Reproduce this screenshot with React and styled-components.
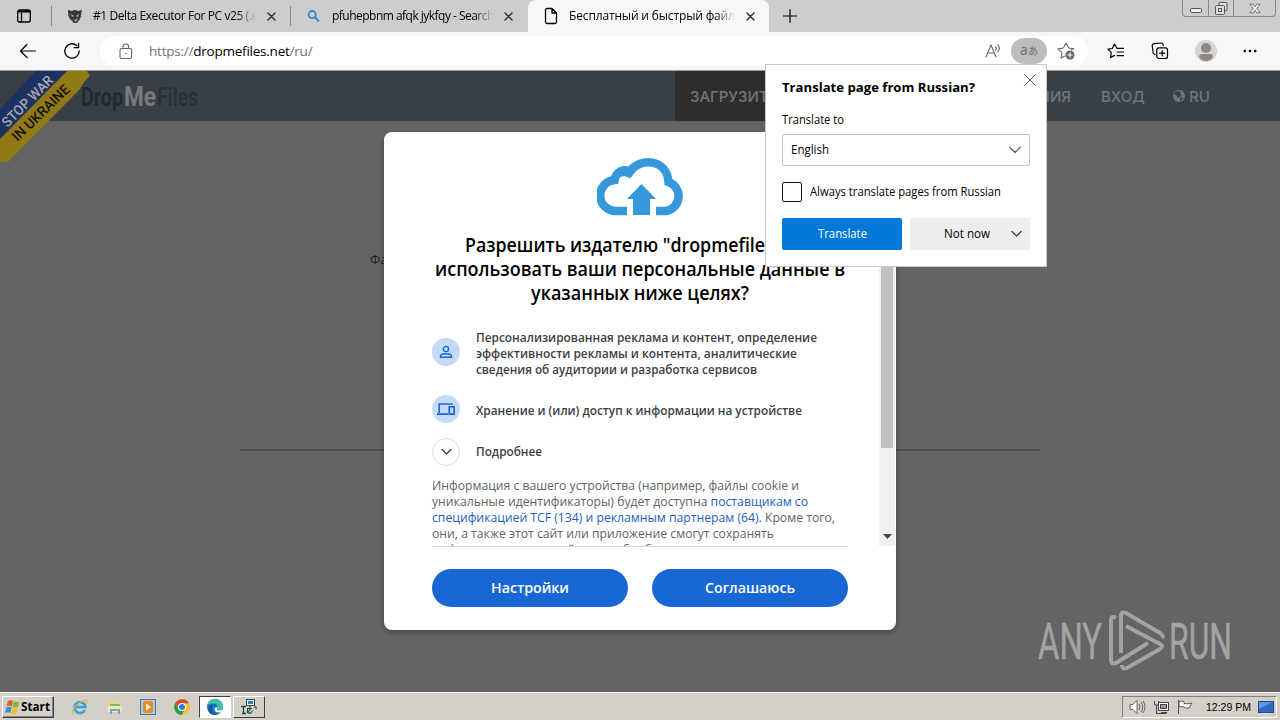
import React from 'react'
import styled, { createGlobalStyle } from 'styled-components'

const uiFont = `'Open Sans', 'Noto Sans', sans-serif`

const tabs = [
  { title: '#1 Delta Executor For PC v25 (.e', icon: 'delta', width: 239, spacing: -0.42 },
  { title: 'pfuhepbnm afqk jykfqy - Search', icon: 'search', width: 237, spacing: -0.52 },
  { title: 'Бесплатный и быстрый файло', icon: 'page', width: 241, spacing: -0.15, active: true },
]

const purposes = [
  {
    icon: 'person',
    lines: [
      ['Персонализированная реклама и контент, определение', 341],
      ['эффективности рекламы и контента, аналитические', 321],
      ['сведения об аудитории и разработка сервисов', 281],
    ],
  },
  { icon: 'devices', lines: [['Хранение и (или) доступ к информации на устройстве', 326]] },
  { icon: 'more', lines: [['Подробнее', 66]] },
]

function Icon({ name }) {
  const line = { fill: 'none', stroke: 'currentColor', strokeLinecap: 'round', strokeLinejoin: 'round' }
  switch (name) {
    case 'workspace':
      return (
        <svg width="16" height="16" viewBox="0 0 16 16" {...line}>
          <rect x="1.7" y="2" width="12.6" height="12" rx="2" strokeWidth="1.3" />
          <path d="M2.500 3.500h11" strokeWidth="2.200" />
          <path d="M5.5 5v9" strokeWidth="1.3" />
        </svg>
      )
    case 'delta':
      return (
        <svg width="16" height="16" viewBox="0 0 16 16">
          <path d="M1 2l4 1q3-2 6 0l4-1-1 5-1 4-3 4H7l-4-4-2-4z" fill="#393939" />
          <path d="M4 6l3 2-2 1zM12 6l-3 2 2 1zM6 11l2 1 3-2-2 4z" fill="#b5b5b5" />
          <path d="M1 6l2 1M13 10l2-2" stroke="#777" />
        </svg>
      )
    case 'search':
      return (
        <svg width="16" height="16" viewBox="0 0 16 16" fill="none" stroke="#3b87c8" strokeWidth="1.8">
          <circle cx="6.2" cy="6.6" r="3.6" />
          <path d="M8.900 9.300l4 4" strokeWidth="2.2" />
        </svg>
      )
    case 'page':
      return (
        <svg width="16" height="18" viewBox="0 0 16 18" {...line} strokeWidth="1.3">
          <path d="M9 1.5H4a1.5 1.5 0 0 0-1.500 1.500v12a1.500 1.500 0 0 0 1.500 1.500h8a1.500 1.500 0 0 0 1.500-1.500V6L9 1.500V6h4.500" />
        </svg>
      )
    case 'close':
      return (
        <svg width="9" height="9" viewBox="0 0 9 9" {...line} stroke="#333" strokeWidth="1.5">
          <path d="M1 1l7 7M8 1L1 8" />
        </svg>
      )
    case 'closeLarge':
      return (
        <svg width="14" height="14" viewBox="0 0 14 14" {...line} strokeWidth="1">
          <path d="M1.500 1.500l11 11M12.500 1.500l-11 11" />
        </svg>
      )
    case 'plus':
      return (
        <svg width="14" height="14" viewBox="0 0 14 14" {...line} strokeWidth="1.2">
          <path d="M7 .5v13M.5 7h13" />
        </svg>
      )
    case 'back':
      return (
        <svg width="18" height="16" viewBox="0 0 18 16" {...line} strokeWidth="1.2">
          <path d="M16.500 8H1.500M8 1.500L1.500 8 8 14.500" />
        </svg>
      )
    case 'reload':
      return (
        <svg width="18" height="18" viewBox="0 0 18 18" {...line} strokeWidth="1.300">
          <path d="M16.200 9A7.200 7.200 0 1 1 13.800 3.600M15.600 1.500v4.200h-4.300" />
        </svg>
      )
    case 'lock':
      return (
        <svg width="14" height="17" viewBox="0 0 14 17" {...line} strokeWidth="1.100">
          <rect x="1" y="5.500" width="11.600" height="10" rx="1.500" />
          <path d="M4 5.500V3.800a2.800 2.800 0 0 1 5.600 0v1.700" />
          <circle cx="6.800" cy="10.500" r=".8" fill="currentColor" stroke="none" />
        </svg>
      )
    case 'aloud':
      return (
        <svg width="16" height="16" viewBox="0 0 16 16" {...line} strokeWidth="1.100">
          <path d="M1 14L6 2l5 12M2.800 10h6.400M10.500 3.500c1 1.200 1 2.600 0 3.800M12.700 1.800c2 2.200 2 4.800 0 7" />
        </svg>
      )
    case 'favAdd':
      return (
        <svg width="18" height="18" viewBox="0 0 18 18" {...line} strokeWidth="1.100">
          <path d="M14.200 7.800L17 6.800l-5.200-.8L9 1.200 6.400 6 1 6.900l4 3.800-1 5.300 4-2" />
          <circle cx="13" cy="13" r="4.500" fill="currentColor" stroke="none" />
          <path d="M13 10.800v4.400M10.800 13h4.400" stroke="#fff" />
        </svg>
      )
    case 'favorites':
      return (
        <svg width="18" height="16" viewBox="0 0 18 16" {...line} strokeWidth="1.200">
          <path d="M10 5.300L7.500 1 5.200 5.500 1 6.200l3.300 3.400-.8 5 4-2.200M10 5.300h6.500M10 9h6.500M10 12.700h6.500" />
        </svg>
      )
    case 'collections':
      return (
        <svg width="18" height="18" viewBox="0 0 18 18" {...line} strokeWidth="1.200">
          <rect x="5.800" y="5.800" width="10.700" height="10.700" rx="2" />
          <path d="M11.200 8.500v5.300M8.500 11.200h5.300M4 12.500L2.800 11.800A2 2 0 0 1 2 9.500L1.200 4a2 2 0 0 1 1.700-2.300L10 1a2 2 0 0 1 2.200 1.700l.1.800" />
        </svg>
      )
    case 'profile':
      return (
        <svg width="22" height="22" viewBox="0 0 22 22">
          <circle cx="11" cy="11" r="11" fill="#d6d3d1" />
          <circle cx="11" cy="8" r="5" fill="#8b8785" />
          <path d="M4 17q0-3 3-3h8q3 0 3 3-2.500 4-7 4t-7-4" fill="#8b8785" />
        </svg>
      )
    case 'dots':
      return (
        <svg width="14" height="4" viewBox="0 0 14 4" fill="currentColor">
          <circle cx="1.800" cy="2" r="1.300" /><circle cx="7" cy="2" r="1.300" /><circle cx="12.200" cy="2" r="1.300" />
        </svg>
      )
    case 'chevron':
      return (
        <svg width="12" height="8" viewBox="0 0 12 8" {...line} stroke="#555" strokeWidth="1.200"><path d="M.7 1.200L6 6.500l5.300-5.300" /></svg>
      )
    case 'chevronSmall':
      return (
        <svg width="11" height="8" viewBox="0 0 11 8" {...line} stroke="#444" strokeWidth="1.400"><path d="M1 1.500L5.500 6 10 1.500" /></svg>
      )
    case 'globe':
      return (
        <svg width="12" height="12" viewBox="0 0 12 12">
          <circle cx="6" cy="6" r="6" fill="currentColor" />
          <path d="M5 1l3 1-1 2 2 1-2 2-2 1-2-3-2-1 1-2zM7 8l3-1-1 3-2 1z" fill="#384047" />
        </svg>
      )
    case 'cloud':
      return (
        <svg width="86" height="58" viewBox="0 0 86 58">
          <path d="M30 53H20A15.500 15.500 0 0 1 17.500 22C19 13 27 10.500 33 13.500C43-1 70 1 71.500 24A15 15 0 0 1 69 53H59" fill="none" stroke="#3498db" strokeWidth="8.500" />
          <path d="M19 22C21 16 29 14 34 19" fill="none" stroke="#3498db" strokeWidth="4" />
          <path d="M44.500 26L59 41h-6v16H36V41h-6z" fill="#3498db" />
        </svg>
      )
    case 'person':
      return (
        <svg width="14" height="14" viewBox="0 0 14 14" fill="none" stroke="#1967d2" strokeWidth="1.400">
          <circle cx="7" cy="4" r="2.600" />
          <path d="M1.500 12.300v-1c0-3.400 11-3.400 11 0v1z" />
        </svg>
      )
    case 'devices':
      return (
        <svg width="20" height="14" viewBox="0 0 20 14" fill="none" stroke="#1967d2" strokeWidth="1.700">
          <path d="M3.200 11V2h13.500M1 12.200h11" />
          <rect x="13.300" y="4.800" width="4.800" height="7.400" />
        </svg>
      )
    default:
      return null
  }
}

// Single line of text set to a known width
function FitLine({ children, width, size, weight = 400, color = '#000', height = 16, family = uiFont }) {
  return (
    <Line width={width} height={height}>
      <text
        x="0" y={height * 0.76} fontFamily={family} fontSize={size} fontWeight={weight}
        fill={color} textLength={width} lengthAdjust="spacingAndGlyphs"
      >
        {children}
      </text>
    </Line>
  )
}

function Ribbon() {
  return (
    <RibbonSvg width="92" height="92" viewBox="0 0 92 92">
      <path d="M0 38L36 0H68L0 69z" fill="#1d3260" />
      <path d="M0 68L67 0H87L90 5 84 11 80 18 9 90 0 91z" fill="#917a16" />
      <g fontFamily="Roboto, sans-serif" fontWeight="500" fontSize="14">
        <text transform="translate(7.500 57) rotate(-45)" fill="#a5a8ad" textLength="66" lengthAdjust="spacingAndGlyphs">STOP WAR</text>
        <text transform="translate(17.500 71) rotate(-44)" fill="#151308" textLength="74" lengthAdjust="spacingAndGlyphs">IN UKRAINE</text>
      </g>
    </RibbonSvg>
  )
}

function SiteLogo() {
  return (
    <svg width="118" height="32" viewBox="0 0 118 32" fontFamily="'Liberation Sans Narrow', 'Roboto', sans-serif" fontWeight="700">
      <text x="0" y="26" fontSize="25" fill="#23292e" textLength="42" lengthAdjust="spacingAndGlyphs">Drop</text>
      <text x="43" y="26" fontSize="28" fill="#777b7e" textLength="32" lengthAdjust="spacingAndGlyphs">Me</text>
      <text x="76" y="26" fontSize="25" fill="#2b3136" textLength="41" lengthAdjust="spacingAndGlyphs">Files</text>
    </svg>
  )
}

function Watermark() {
  return (
    <WatermarkSvg width="196" height="64" viewBox="0 0 196 64" fill="#a3a3a3">
      <g fontFamily="'Roboto', sans-serif" fontSize="50" fontWeight="400" stroke="#a3a3a3" strokeWidth=".5">
        <text x="0" y="50" textLength="64" lengthAdjust="spacingAndGlyphs">ANY</text>
        <text x="131" y="50" textLength="63" lengthAdjust="spacingAndGlyphs">RUN</text>
      </g>
      <g fill="none" stroke="#a3a3a3" strokeWidth="4" strokeLinejoin="round">
        <path d="M78 9q-5-3-5 2v40q0 5 5 3l32-20" />
        <path d="M83 44V7q0-5 5-3l34 20q4 3 2 5" />
        <path d="M88 17l34 18q4 2 0 5L89 59q-5 2-5-3" />
      </g>
    </WatermarkSvg>
  )
}

function App() {
  return (
    <Screen>
      <GlobalStyle />
      <TabStrip>
        <Workspace><Icon name="workspace" /></Workspace>
        {tabs.map(tab => (
          <Tab key={tab.icon} $active={tab.active} $width={tab.width}>
            <Icon name={tab.icon} />
            <TabTitle $spacing={tab.spacing}>{tab.title}</TabTitle>
            <Icon name="close" />
          </Tab>
        ))}
        <NewTab><Icon name="plus" /></NewTab>
        <WindowButtons>
          <WindowButton $width={25}>
            <svg width="14" height="12" viewBox="0 0 14 12"><rect x="1.500" y="6.500" width="11" height="4" rx="1" fill="#eee" stroke="#555" /></svg>
          </WindowButton>
          <WindowButton $width={25}>
            <svg width="13" height="13" viewBox="0 0 13 13" fill="#ddd" stroke="#555"><rect x="4" y=".5" width="8" height="8" rx="1" /><rect x=".5" y="3.500" width="9" height="9" rx="1" /><rect x="3.500" y="6.500" width="3" height="3" /></svg>
          </WindowButton>
          <WindowButton $width={42}>
            <svg width="12" height="11" viewBox="0 0 14 12"><path d="M1 1h4l2 3 2-3h4L9 6l4 5H9L7 8l-2 3H1l4-5z" fill="#eee" stroke="#666" /></svg>
          </WindowButton>
        </WindowButtons>
      </TabStrip>

      <Toolbar>
        <NavButtons><Icon name="back" /><Icon name="reload" /></NavButtons>
        <AddressBar>
          <Icon name="lock" />
          <Url>https://<b>dropmefiles.net</b>/ru/</Url>
          <AddressActions>
            <Icon name="aloud" />
            <TranslateBadge>a<small>あ</small></TranslateBadge>
            <Icon name="favAdd" />
          </AddressActions>
        </AddressBar>
        <ToolbarActions>
          <Icon name="favorites" />
          <Icon name="collections" />
          <Icon name="profile" />
          <Icon name="dots" />
        </ToolbarActions>
      </Toolbar>

      <Page>
        <SiteHeader>
          <SiteLogo />
          <SiteNav>
            <NavItem $active $width={262}>ЗАГРУЗИТЬ</NavItem>
            <NavItem $width={149} $end>КОМПАНИЯ</NavItem>
            <NavItem $width={72}>ВХОД</NavItem>
            <NavItem $width={122}><Icon name="globe" />RU</NavItem>
          </SiteNav>
        </SiteHeader>
        <PageBody>
          <FileText>Фа</FileText>
          <Divider />
        </PageBody>
        <Ribbon />
        <Overlay>
          <Dialog>
            <DialogScroll>
              <DialogContent>
                <Icon name="cloud" />
                <DialogTitle>
                  <FitLine width={350} size={19} weight={600} height={24}>Разрешить издателю "dropmefiles.net"</FitLine>
                  <FitLine width={410} size={19} weight={600} height={24}>использовать ваши персональные данные в</FitLine>
                  <FitLine width={218} size={19} weight={600} height={24}>указанных ниже целях?</FitLine>
                </DialogTitle>
                <Purposes>
                  {purposes.map(item => (
                    <Purpose key={item.icon}>
                      <PurposeIcon $outline={item.icon === 'more'}>
                        <Icon name={item.icon === 'more' ? 'chevronSmall' : item.icon} />
                      </PurposeIcon>
                      <div>
                        {item.lines.map(([text, width]) => (
                          <FitLine key={text} width={width} size={12} weight={600} color="#3c4043">{text}</FitLine>
                        ))}
                      </div>
                    </Purpose>
                  ))}
                </Purposes>
                <Details>
                  <FitLine width={367} size={12} color="#5f6368">Информация с вашего устройства (например, файлы cookie и</FitLine>
                  <FitLine width={376} size={12} color="#5f6368">уникальные идентификаторы) будет доступна <tspan fill="#1a5fc0">поставщикам со</tspan></FitLine>
                  <FitLine width={403} size={12} color="#5f6368"><tspan fill="#1a5fc0">спецификацией TCF (134) и рекламным партнерам (64).</tspan> Кроме того,</FitLine>
                  <FitLine width={342} size={12} color="#5f6368">они, а также этот сайт или приложение смогут сохранять</FitLine>
                  <FitLine width={305} size={12} color="#5f6368">информацию на устройстве и обрабатывать ваши</FitLine>
                </Details>
              </DialogContent>
              <Scrollbar>
                <Thumb />
                <svg width="9" height="5" viewBox="0 0 9 5"><path d="M0 0h9L4.500 5z" fill="#444" /></svg>
              </Scrollbar>
            </DialogScroll>
            <DialogFooter>
              <Pill><FitLine width={78} size={14} weight={600} color="#fff" height={18}>Настройки</FitLine></Pill>
              <Pill><FitLine width={90} size={14} weight={600} color="#fff" height={18}>Соглашаюсь</FitLine></Pill>
            </DialogFooter>
          </Dialog>
        </Overlay>
        <Watermark />
      </Page>

      <TranslatePopup>
        <PopupHead>
          <FitLine width={193} size={13} weight={700} height={20}>Translate page from Russian?</FitLine>
          <Icon name="closeLarge" />
        </PopupHead>
        <PopupLabel><FitLine width={62} size={12}>Translate to</FitLine></PopupLabel>
        <Select><FitLine width={38} size={12}>English</FitLine><Icon name="chevron" /></Select>
        <CheckRow><Checkbox /><FitLine width={191} size={12}>Always translate pages from Russian</FitLine></CheckRow>
        <PopupButtons>
          <PopupButton $primary><FitLine width={49} size={12} color="#fff">Translate</FitLine></PopupButton>
          <PopupButton><FitLine width={46} size={12}>Not now</FitLine><Icon name="chevronSmall" /></PopupButton>
        </PopupButtons>
      </TranslatePopup>

      <Taskbar>
        <StartButton>
          <svg width="15" height="15" viewBox="0 0 15 15">
            <path d="M3 1q3-1.500 5 0L7 6.500q-3-1.500-5.500 0z" fill="#e6602b" />
            <path d="M8.800 1.300q3 1.300 5.700 0L13 7q-3 1-5.300 0z" fill="#80b936" />
            <path d="M1.300 7.500q3-1.500 5.300 0L5.500 13Q3 11.500 0 13z" fill="#3f8bd0" />
            <path d="M7.500 8q3 1.300 5.500 0l-1.500 5.500q-3 1.300-5.500 0z" fill="#f3bd29" />
          </svg>
          <FitLine width={29} size={12} weight={700} family="'Open Sans', sans-serif">Start</FitLine>
        </StartButton>
        <QuickLaunch>
          <svg width="18" height="16" viewBox="0 0 18 16" fill="none">
            <path d="M14 11a5.500 5.500 0 1 1 .5-3H5" stroke="#35a4dc" strokeWidth="2.600" />
            <path d="M3 14C-1 15 3 7 9 3.500s8-3 6.500 1" stroke="#e8b338" strokeWidth="1.200" />
          </svg>
          <svg width="16" height="16" viewBox="0 0 16 16">
            <path d="M1 2h6l1 2h6v9H1z" fill="#efd67c" /><path d="M3 5h10v3H3z" fill="#78b86a" /><path d="M1 7h14v6H1z" fill="#f8e7a2" />
            <path d="M3 15v-5h10v5h-2v-3H5v3z" fill="#60acd7" />
          </svg>
          <svg width="16" height="16" viewBox="0 0 16 16">
            <rect x=".5" y=".5" width="15" height="15" fill="#a9cdea" stroke="#3c7cb5" /><rect x="3" y="2" width="10" height="12" rx="2" fill="#f28a1a" /><path d="M6 4.500l5 3.500-5 3.500z" fill="#fff" />
          </svg>
          <svg width="16" height="16" viewBox="0 0 16 16">
            <circle cx="8" cy="8" r="8" fill="#f5c52b" /><path d="M1.200 4A8 8 0 0 1 15 4.200H8a4 4 0 0 0-3.500 5.500z" fill="#dd4437" />
            <path d="M1.200 4A8 8 0 0 0 7.500 16l3.700-6H4.500z" fill="#2a9c50" /><circle cx="8" cy="8" r="4" fill="#fff" /><circle cx="8" cy="8" r="3" fill="#367bd9" />
          </svg>
        </QuickLaunch>
        <TaskButton $pressed>
          <svg width="16" height="16" viewBox="0 0 16 16">
            <circle cx="8" cy="8" r="8" fill="#1979c7" />
            <path d="M.2 6.500A8 8 0 0 1 16 8q0 3.500-5 3l-1-1Q12 5 7 4.500 2 4.200.2 6.500" fill="#3fc6a0" />
            <path d="M5 9q0 5 5.500 6.500Q4 17 1.500 12 0 8 4 6q4-1.500 5.500 1Q5 6 5 9" fill="#1458a0" />
            <path d="M9.500 8q1.500 1 .2 2.700Q12 12.500 16 10.500l-1 2.500q-4 1.500-7-1-1.500-3 1.500-4" fill="#fff" />
          </svg>
        </TaskButton>
        <TaskButton>
          <svg width="16" height="16" viewBox="0 0 16 16">
            <rect x="5.500" y=".5" width="8" height="6" fill="#e8edf0" stroke="#444" /><rect x="7" y="2" width="5" height="3" fill="#2186c5" />
            <path d="M0 7.500h5M2.500 7.500V14M1 14.500h4" fill="none" stroke="#253d3b" strokeWidth="1.300" />
            <path d="M7 9.500h4M9 7v5M13 8.500l2-1v3M6.500 9v5" fill="none" stroke="#253d3b" /><path d="M7 11h6l-3 4H7z" fill="#35866f" />
            <path d="M8.500 12.500l3-1" stroke="#dcefe8" />
          </svg>
        </TaskButton>
        <Tray>
          <svg width="17" height="16" viewBox="0 0 17 16" fill="#fff" stroke="#666"><path d="M1 5.500h3l4-4v13l-4-4H1z" /><path d="M10 5q2 3 0 6M12 3q3.500 5 0 10M14 2q4 6 0 12" fill="none" /></svg>
          <svg width="17" height="16" viewBox="0 0 17 16" fill="#fff" stroke="#444"><rect x="5.500" y="3.500" width="10" height="8" /><rect x="7.500" y="5.500" width="6" height="4" fill="#999" /><path d="M1.500 2v4h4V2M3.500 6v8.500h10M8 13.500h6" fill="none" /></svg>
          <svg width="16" height="16" viewBox="0 0 16 16" fill="#fff" stroke="#555"><path d="M1.500 1v14M2 2.500q3-1 5 0v2q4 1 8-.5l-3 5q-3 1-5-1-3-1-5 0z" /></svg>
          <Clock><FitLine width={45} size={11.5} height={15} family="'Liberation Sans', sans-serif">12:29 PM</FitLine></Clock>
          <svg width="16" height="13" viewBox="0 0 16 13"><rect x=".5" y=".5" width="15" height="11" fill="#2d69c5" stroke="#234a80" /><path d="M1 1h14L1 8z" fill="#5b95e3" /><path d="M4 12.500h8" stroke="#dfe6ee" /></svg>
        </Tray>
      </Taskbar>
    </Screen>
  )
}

const GlobalStyle = createGlobalStyle`
  * {
    box-sizing: border-box;
  }
  body {
    margin: 0;
    overflow: hidden;
  }
  svg {
    flex-shrink: 0;
  }
`
const Line = styled.svg`
  display: block;
  overflow: visible;
`
const Screen = styled.div`
  position: relative;
  display: flex;
  flex-direction: column;
  width: 1280px;
  height: 720px;
  overflow: hidden;
  font-family: ${uiFont};
  font-size: 12px;
  color: #000;
`
const TabStrip = styled.div`
  display: flex;
  height: 32px;
  background: #cdcdcd;
`
const Workspace = styled.div`
  display: flex;
  align-items: center;
  justify-content: flex-end;
  width: 52px;
  padding-right: 19px;
  border-right: 1px solid #8b8b8b;
  height: 20px;
  margin-top: 6px;
`
const Tab = styled.div`
  display: flex;
  align-items: center;
  width: ${p => p.$width}px;
  height: ${p => (p.$active ? '32px' : '20px')};
  margin-top: ${p => (p.$active ? 0 : '6px')};
  padding: 0 14px 0 15px;
  background: ${p => (p.$active ? '#f7f7f7' : 'transparent')};
  border-radius: ${p => (p.$active ? '8px 8px 0 0' : 0)};
  border-right: ${p => (p.$active ? 'none' : '1px solid #8b8b8b')};

  & + & {
    border-right-color: transparent;
  }
`
const TabTitle = styled.span`
  flex: 1;
  margin: 0 11px 0 10px;
  line-height: 20px;
  font-size: 12px;
  letter-spacing: ${p => p.$spacing}px;
  white-space: nowrap;
  overflow: hidden;
  mask-image: linear-gradient(to right, #000 88%, transparent);
`
const NewTab = styled.div`
  padding: 9px 0 0 14px;
`
const WindowButtons = styled.div`
  display: flex;
  height: 17px;
  margin: 0 4px 0 auto;
  border: 1px solid #888;
  border-top: 0;
  border-radius: 0 0 4px 4px;
`
const WindowButton = styled.div`
  display: flex;
  align-items: center;
  justify-content: center;
  width: ${p => p.$width}px;

  & + & {
    border-left: 1px solid #888;
  }
`
const Toolbar = styled.div`
  display: flex;
  align-items: center;
  height: 38px;
  background: #f7f7f7;
`
const NavButtons = styled.div`
  display: flex;
  align-items: center;
  gap: 26px;
  width: 100px;
  padding-left: 19px;
`
const AddressBar = styled.div`
  display: flex;
  align-items: center;
  width: 988px;
  height: 30px;
  padding-left: 19px;
  background: #fff;
  border-radius: 15px;
  color: #666;
`
const Url = styled.span`
  margin-left: 16px;
  font-size: 13.5px;
  letter-spacing: -0.23px;
  color: #707070;

  b {
    font-weight: 400;
    color: #000;
  }
`
const AddressActions = styled.div`
  display: flex;
  align-items: center;
  gap: 10px;
  margin: 0 13px 0 auto;
`
const TranslateBadge = styled.span`
  width: 36px;
  height: 26px;
  border-radius: 13px;
  background: #bdbdbd;
  color: #707070;
  font: 14px/24px 'Open Sans', 'Noto Sans CJK JP', sans-serif;
  text-align: center;

  small {
    font-size: 10px;
  }
`
const ToolbarActions = styled.div`
  display: flex;
  align-items: center;
  gap: 26px;
  padding-left: 19px;
`
const Page = styled.main`
  position: relative;
  height: 622px;
  background: #646464;
  overflow: hidden;
`
const SiteHeader = styled.header`
  display: flex;
  height: 52px;
  padding: 9px 0 0 81px;
  background: #384047;
  border-top: 1px solid #9a9da0;
  border-bottom: 1px solid #5c5f61;
`
const SiteNav = styled.nav`
  display: flex;
  margin: -9px 0 0 auto;
`
const NavItem = styled.span`
  display: flex;
  align-items: center;
  justify-content: ${p => (p.$end ? 'flex-end' : 'flex-start')};
  gap: 4px;
  width: ${p => p.$width}px;
  height: 50px;
  padding: 0 15px;
  background: ${p => (p.$active ? '#2d2d2d' : 'transparent')};
  color: #727679;
  font: 500 15px Inter, sans-serif;
  white-space: nowrap;
`
const PageBody = styled.div`
  width: 800px;
  margin: 0 auto;
  padding-top: 128px;
`
const FileText = styled.div`
  height: 199px;
  padding-left: 130px;
  font-size: 13px;
  color: #222;
`
const Divider = styled.div`
  height: 2px;
  background: #4b4b4b;
`
const RibbonSvg = styled.svg`
  position: absolute;
  top: 1px;
  left: 0;
`
const WatermarkSvg = styled.svg`
  position: absolute;
  right: 46px;
  bottom: 19px;
`
const Overlay = styled.div`
  position: absolute;
  inset: 0;
  display: flex;
  align-items: center;
  justify-content: center;
`
const Dialog = styled.section`
  width: 512px;
  height: 498px;
  background: #fff;
  border-radius: 8px;
  overflow: hidden;
  box-shadow: 0 2px 5px rgba(0, 0, 0, 0.3);
`
const DialogScroll = styled.div`
  display: flex;
  height: 414px;
  overflow: hidden;
`
const DialogContent = styled.div`
  display: flex;
  flex-direction: column;
  align-items: center;
  width: 495px;
  padding: 26px 31px 0 48px;
  overflow: hidden;

  & > * {
    flex-shrink: 0;
  }
`
const DialogTitle = styled.div`
  display: flex;
  flex-direction: column;
  align-items: center;
  margin-top: 18px;
`
const Purposes = styled.div`
  display: flex;
  flex-direction: column;
  width: 416px;
  margin-top: 24px;
`
const Purpose = styled.div`
  display: flex;
  align-items: center;
  gap: 16px;

  &:nth-child(2) {
    margin: 21px 0 15px;
  }
`
const PurposeIcon = styled.div`
  display: flex;
  align-items: center;
  justify-content: center;
  width: 28px;
  height: 28px;
  margin-top: ${p => (p.$outline ? 0 : '-4px')};
  border-radius: 50%;
  background: ${p => (p.$outline ? '#fff' : '#c5daf7')};
  border: ${p => (p.$outline ? '1px solid #dcdcdc' : 'none')};
  color: #444;
`
const Details = styled.div`
  width: 416px;
  margin-top: 12px;
`
const Scrollbar = styled.div`
  display: flex;
  flex-direction: column;
  align-items: center;
  justify-content: space-between;
  width: 16px;
  padding: 17px 0 7px;
  background: #f1f1f1;
`
const Thumb = styled.div`
  width: 12px;
  height: 299px;
  background: #c1c1c1;
`
const DialogFooter = styled.div`
  display: flex;
  gap: 24px;
  width: 416px;
  margin-left: 48px;
  padding-top: 22px;
  border-top: 1px solid #d5d5d5;
`
const Pill = styled.button`
  display: flex;
  align-items: center;
  justify-content: center;
  width: 196px;
  height: 38px;
  border: 0;
  border-radius: 19px;
  background: #1967d2;
`
const TranslatePopup = styled.aside`
  position: absolute;
  left: 765px;
  top: 64px;
  width: 282px;
  height: 203px;
  padding: 8px 16px;
  background: #fff;
  border: 1px solid #c8c8c8;
`
const PopupHead = styled.div`
  display: flex;
  justify-content: space-between;
  height: 36px;
  padding-top: 4px;
  color: #555;

  & > svg:last-child {
    margin: -4px -7px 0 0;
  }
`
const PopupLabel = styled.div`
  height: 25px;
  padding-top: 3px;
`
const Select = styled.div`
  display: flex;
  align-items: center;
  justify-content: space-between;
  height: 32px;
  padding: 0 8px;
  border: 1px solid #c5c5c5;
  border-radius: 2px;
`
const CheckRow = styled.div`
  display: flex;
  align-items: center;
  gap: 8px;
  margin-top: 16px;
`
const Checkbox = styled.span`
  width: 20px;
  height: 20px;
  border: 1px solid #111;
  border-radius: 2px;
`
const PopupButtons = styled.div`
  display: flex;
  gap: 8px;
  margin-top: 16px;
`
const PopupButton = styled.button`
  display: flex;
  align-items: center;
  justify-content: ${p => (p.$primary ? 'center' : 'space-between')};
  width: 120px;
  height: 32px;
  padding: ${p => (p.$primary ? 0 : '0 8px 0 34px')};
  border: 0;
  border-radius: 2px;
  background: ${p => (p.$primary ? '#0078d7' : '#eee')};
`
const Taskbar = styled.footer`
  display: flex;
  align-items: flex-start;
  height: 28px;
  padding: 3px 3px 0 2px;
  border-top: 1px solid #fff;
  background: #d4d0c8;
`
const StartButton = styled.div`
  display: flex;
  align-items: center;
  gap: 1px;
  width: 52px;
  height: 22px;
  padding-left: 2px;
  border: 1px solid;
  border-color: #fff #404040 #404040 #fff;
  box-shadow: inset -1px -1px #808080;
`
const QuickLaunch = styled.div`
  display: flex;
  align-items: center;
  gap: 17.5px;
  width: 145px;
  height: 22px;
  padding-left: 17px;
`
const TaskButton = styled.div`
  display: flex;
  align-items: center;
  justify-content: center;
  width: 32px;
  height: 22px;
  margin-right: 2px;
  border: 1px solid;
  border-color: ${p => (p.$pressed ? '#404040 #fff #fff #404040' : '#fff #404040 #404040 #fff')};
  background: ${p => (p.$pressed ? '#fff' : '#d4d0c8')};
`
const Tray = styled.div`
  display: flex;
  align-items: center;
  gap: 7px;
  width: 155px;
  height: 22px;
  margin-left: auto;
  padding-left: 6px;
  border: 1px solid;
  border-color: #808080 #fff #fff #808080;
`
const Clock = styled.div`
  margin-left: 6px;
`

export default App
